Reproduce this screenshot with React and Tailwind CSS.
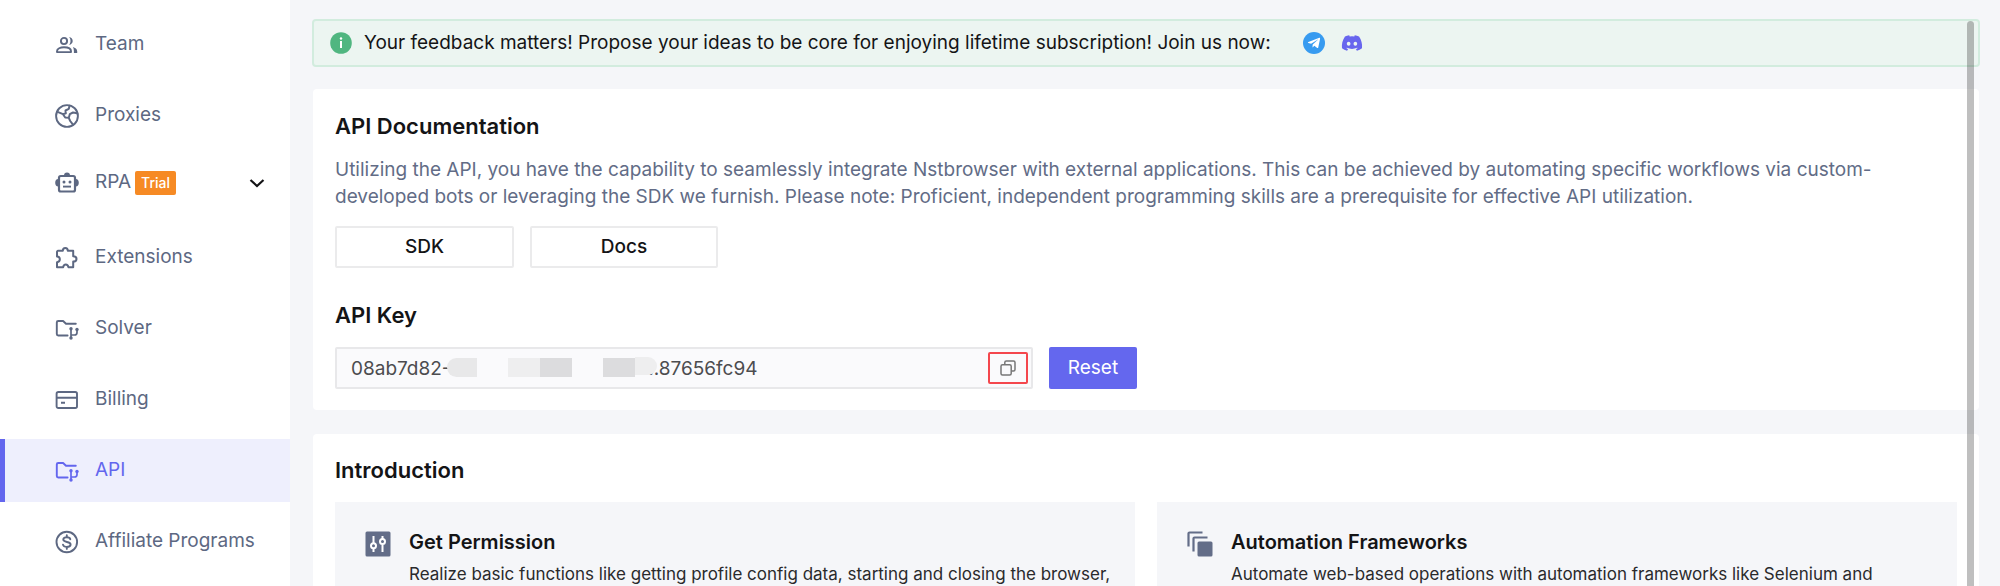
import React from "react";
import { FaDiscord, FaTelegramPlane } from "react-icons/fa";

function Icon({ children, className = "size-6" }) {
  return (
    <svg
      viewBox="0 0 24 24"
      className={`${className} shrink-0`}
      fill="none"
      stroke="currentColor"
      strokeWidth="1.9"
      strokeLinecap="round"
      strokeLinejoin="round"
      aria-hidden="true"
    >
      {children}
    </svg>
  );
}

const TeamIcon = () => (
  <Icon>
    <circle cx="9" cy="8" r="3.1" />
    <path d="M2 18.2c0-2.700 3.400-3.900 7-3.900s7 1.200 7 3.900v.9H2z" />
    <path
      d="M14.200 4.100c1.900.2 3.500 1.900 3.500 3.900s-1.600 3.700-3.500 3.900c.8-1.100 1.300-2.500 1.300-3.900s-.5-2.800-1.300-3.900zM17.900 14c2.300.7 4.300 2 4.300 4.400V20h-3.300v-2c0-1.600-.4-2.900-1-4z"
      fill="currentColor"
      stroke="none"
    />
  </Icon>
);

const GlobeIcon = () => (
  <Icon>
    <circle cx="12" cy="12" r="10.900" />
    <path d="M2.500 7.800l5.500 2.400 2.800-.9-.3-2.800 3.300-1.700.8-3M8 10.200l2.200 3.300 3.600.3 1.400 3.200 2.600 3.400M22.300 9.300l-4.300-.8-3.200 1.700-1 3.600" strokeWidth="2" />
  </Icon>
);

const RobotIcon = () => (
  <Icon>
    <rect x="4" y="5" width="16" height="15.500" rx="1.800" strokeWidth="2.200" />
    <path d="M9 4.500a3 3 0 0 1 6 0zM3.200 8v7.500C1.300 15.500.2 14 .2 11.800S1.300 8 3.200 8zM20.800 8v7.500c1.900 0 3-1.500 3-3.700S22.700 8 20.800 8z" fill="currentColor" stroke="none" />
    <circle cx="9" cy="11" r="1.500" fill="currentColor" stroke="none" />
    <circle cx="15" cy="11" r="1.500" fill="currentColor" stroke="none" />
    <path d="M8 15.600h8" strokeLinecap="butt" />
  </Icon>
);

const PuzzleIcon = () => (
  <Icon>
    <path d="M3 4.800h4.800c0-3.900 5-3.900 5 0h5.400v5.400c4.400 0 4.400 5.400 0 5.400v5.600h-4.800c-.6-3.600-4.700-3.600-5.200 0H2v-5c3.800-.4 3.800-5.400 0-5.600V5.800a1 1 0 0 1 1-1z" strokeWidth="2" />
  </Icon>
);

const FolderIcon = () => (
  <Icon>
    <path d="M12.600 18.500H3.200A1.400 1.400 0 0 1 1.800 17.100V5.400A1.400 1.400 0 0 1 3.200 4h4.900l2.900 2.800h9.800" />
    <path d="M16 12v9M16 18h3.500a2.500 2.500 0 0 0 2.500-2.500V13" strokeWidth="1.700" />
    <circle cx="16" cy="11.800" r="1.700" fill="currentColor" stroke="none" />
    <circle cx="22" cy="12.500" r="1.700" fill="currentColor" stroke="none" />
    <circle cx="16" cy="21" r="1.700" fill="currentColor" stroke="none" />
  </Icon>
);

const CardIcon = () => (
  <Icon>
    <rect x="1.600" y="4" width="20.400" height="16" rx="1.800" />
    <path d="M2 9.800h20M6 14.800h4" strokeLinecap="butt" />
  </Icon>
);

const DollarIcon = () => (
  <Icon>
    <circle cx="11.800" cy="12" r="10.300" />
    <path d="M15.300 9.300c-.3-1.400-1.700-2.100-3.500-2.100-2 0-3.500.9-3.500 2.400 0 3.400 7.300 1.400 7.300 4.900 0 1.500-1.600 2.400-3.800 2.400-2 0-3.500-.8-3.800-2.300M11.800 5.200v2M11.800 16.900v2" />
  </Icon>
);

const SlidersIcon = () => (
  <svg viewBox="0 0 26 26" className="size-[26px] shrink-0" fill="none" aria-hidden="true">
    <rect x="0.500" y="0.500" width="25" height="25" rx="1.500" fill="#636d88" />
    <g stroke="#fff" strokeWidth="2">
      <path d="M8.500 5v7M8.500 17.500V21M17.500 5v3M17.500 13.500V21" />
      <circle cx="8.500" cy="14.800" r="2.500" />
      <circle cx="17.500" cy="10.600" r="2.500" />
    </g>
  </svg>
);

const StackIcon = () => (
  <svg viewBox="0 0 26 26" className="size-[26px] shrink-0" fill="none" aria-hidden="true">
    <path d="M1.500 15.500V2.500a1 1 0 0 1 1-1H15.500M6.500 20.500V7.500a1 1 0 0 1 1-1H20.500" stroke="#636d88" strokeWidth="2.200" />
    <rect x="10.500" y="10.500" width="15" height="15" rx="1.500" fill="#636d88" />
  </svg>
);

const CopyIcon = () => (
  <svg viewBox="0 0 16 16" className="size-4" fill="none" stroke="#777" strokeWidth="1.500" aria-hidden="true">
    <rect x="1" y="4.800" width="10.200" height="10.200" rx="1.500" />
    <path d="M4.800 4.800V2.500A1.500 1.500 0 0 1 6.300 1h7.200A1.500 1.500 0 0 1 15 2.500v7a1.500 1.500 0 0 1-1.500 1.500h-2.300" />
  </svg>
);

function NavItem({ icon: NavIcon, label, active }) {
  return (
    <a
      href="#"
      aria-current={active ? "page" : undefined}
      className={`flex h-[63px] items-center gap-4 border-l-[5px] pl-[50px] ${
        active ? "border-[#6366ee] bg-[#eeeffd] text-[#6366ee]" : "border-transparent"
      }`}
    >
      <NavIcon />
      <span>{label}</span>
    </a>
  );
}

function Feature({ icon, title, text }) {
  return (
    <article className="flex min-h-40 gap-[18px] bg-[#f5f6f9] pt-7 pr-3 pl-[30px]">
      <div className="mt-px">{icon}</div>
      <div>
        <h3 className="text-[20px] leading-6 font-semibold">{title}</h3>
        <p className="mt-2 text-[17px] leading-6 text-[#2a2a2c]">{text}</p>
      </div>
    </article>
  );
}

export default function App() {
  return (
    <div className="flex h-screen overflow-hidden bg-[#f5f6f9] font-['Inter',sans-serif] text-[#141416]">
      <nav className="flex w-[290px] shrink-0 flex-col gap-2 bg-white pt-[13px] text-[19px] text-[#5d6882]">
        <NavItem icon={TeamIcon} label="Team" />
        <NavItem icon={GlobeIcon} label="Proxies" />
        <button type="button" className="mb-2 flex h-[55px] items-center pr-6 pl-[55px]">
          <RobotIcon />
          <span className="ml-4">RPA</span>
          <span className="ml-1 rounded-xs bg-[#f68a24] px-[6px] text-sm leading-6 font-medium text-white">Trial</span>
          <svg viewBox="0 0 18 18" className="ml-auto size-[18px]" fill="none" stroke="#141416" strokeWidth="2.200" aria-hidden="true">
            <path d="M2.500 6l6.500 6 6.500-6" />
          </svg>
        </button>
        <NavItem icon={PuzzleIcon} label="Extensions" />
        <NavItem icon={FolderIcon} label="Solver" />
        <NavItem icon={CardIcon} label="Billing" />
        <NavItem icon={FolderIcon} label="API" active />
        <NavItem icon={DollarIcon} label="Affiliate Programs" />
      </nav>

      <main className="relative min-w-0 flex-1 pt-[19px] pr-5 pl-[22px]">
        <div className="flex h-12 items-center rounded-sm border-2 border-[#d2ecde] bg-[#ecf5f1] px-4 text-[19px]">
          <svg viewBox="0 0 22 22" className="size-[22px] shrink-0" aria-hidden="true">
            <circle cx="11" cy="11" r="10.800" fill="#50b680" />
            <path d="M11 9v7" stroke="#fff" strokeWidth="2" />
            <circle cx="11" cy="6.500" r="1.200" fill="#fff" />
          </svg>
          <p className="ml-3">
            Your feedback matters! Propose your ideas to be core for enjoying lifetime subscription! Join us now:
          </p>
          <a href="#" aria-label="Telegram" className="ml-8 flex size-[22px] items-center justify-center rounded-full bg-[#379bf0] text-white">
            <FaTelegramPlane className="size-[14px]" />
          </a>
          <a href="#" aria-label="Discord" className="ml-4 text-[#6866ee]">
            <FaDiscord className="size-[22px]" />
          </a>
        </div>

        <section className="mx-px mt-[22px] rounded-sm bg-white px-[22px] pt-[23px] pb-[21px]">
          <h2 className="text-[22px] leading-7 font-semibold">API Documentation</h2>
          <p className="mt-4 text-[19px] leading-[27px] text-[#626c86]">
            Utilizing the API, you have the capability to seamlessly integrate Nstbrowser with external applications. This can be achieved by automating specific workflows via custom-developed bots or leveraging the SDK we furnish. Please note: Proficient, independent programming skills are a prerequisite for effective API utilization.
          </p>
          <div className="mt-4 flex gap-4 text-[19px] font-medium">
            <button type="button" className="h-[42px] w-[179px] rounded-xs border-2 border-[#ebebec]">SDK</button>
            <button type="button" className="h-[42px] w-[188px] rounded-xs border-2 border-[#ebebec]">Docs</button>
          </div>

          <h2 className="mt-[33px] text-[22px] leading-7 font-semibold">
            <label htmlFor="api-key">API Key</label>
          </h2>
          <div className="mt-[18px] flex gap-4 text-[19px]">
            <div className="relative w-[698px]">
              <input
                id="api-key"
                readOnly
                value={"08ab7d82-" + "\u00a0".repeat(37) + "..87656fc94"}
                className="h-[42px] w-full rounded-xs border-2 border-[#e8e8ea] bg-[#fafafc] px-[14px] text-[#4c4c4f]"
              />
              <span className="absolute top-[11px] left-[112px] h-[19px] w-[30px] rounded-l-full bg-[#e8e8e9]" />
              <span className="absolute top-[11px] left-[173px] h-[19px] w-8 bg-[#eeeeef]" />
              <span className="absolute top-[11px] left-[205px] h-[19px] w-8 bg-[#dcdcde]" />
              <span className="absolute top-[11px] left-[268px] h-[19px] w-8 bg-[#dcdcde]" />
              <span className="absolute top-[10px] left-[300px] h-[18px] w-[22px] rounded-r-full bg-[#eeeeef]" />
              <button
                type="button"
                aria-label="Copy API key"
                className="absolute top-[5px] right-[5px] flex h-8 w-10 items-center justify-center rounded-xs border-2 border-[#f4474d]"
              >
                <CopyIcon />
              </button>
            </div>
            <button type="button" className="h-[42px] w-[88px] rounded-xs bg-[#6467ee] text-white">Reset</button>
          </div>
        </section>

        <section className="mx-px mt-6 rounded-sm bg-white px-[22px] pt-[22px] pb-6">
          <h2 className="text-[22px] leading-7 font-semibold">Introduction</h2>
          <div className="mt-[18px] grid grid-cols-2 gap-[22px]">
            <Feature
              icon={<SlidersIcon />}
              title="Get Permission"
              text="Realize basic functions like getting profile config data, starting and closing the browser,"
            />
            <Feature
              icon={<StackIcon />}
              title="Automation Frameworks"
              text="Automate web-based operations with automation frameworks like Selenium and"
            />
          </div>
        </section>

        <div className="absolute top-[21px] right-[26px] bottom-0 w-[7px] rounded-t-full bg-black/25" />
      </main>
    </div>
  );
}
